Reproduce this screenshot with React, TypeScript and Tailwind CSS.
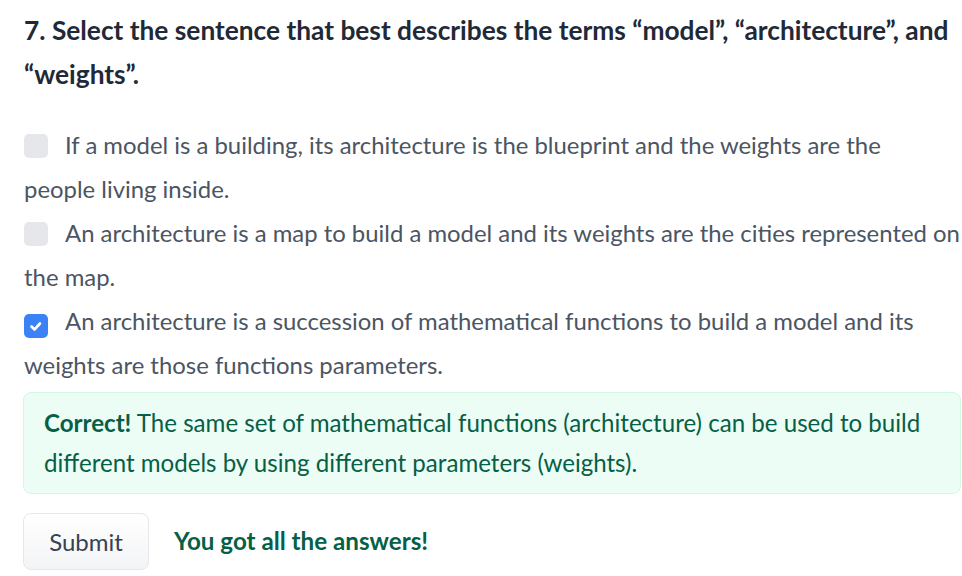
import React from 'react';

const options = [
  {
    id: 'a',
    label: 'If a model is a building, its architecture is the blueprint and the weights are the people\u00a0living inside.',
    checked: false,
  },
  {
    id: 'b',
    label: 'An architecture is a map to build a model and its weights are the cities represented on the map.',
    checked: false,
  },
  {
    id: 'c',
    label: 'An architecture is a succession of mathematical functions to build a model and its weights are those functions parameters.',
    checked: true,
  },
];

function Checkbox({ checked }: { checked: boolean }) {
  return (
    <span
      className={`inline-flex w-6 h-6 rounded-[5px] mr-[17px] align-[-4px] items-center justify-center ${
        checked ? 'bg-[#3b82f6]' : 'bg-[#e5e7eb]'
      }`}
    >
      {checked && (
        <svg width="16" height="16" viewBox="0 0 16 16" fill="none">
          <path d="M3.5 8.5l3 3 5.5-6" stroke="white" strokeWidth="2.6" strokeLinecap="round" strokeLinejoin="round" />
        </svg>
      )}
    </span>
  );
}

export default function App() {
  return (
    <div
      className="w-[962px] h-[576px] bg-white pl-6 pr-[1px] pt-2 overflow-hidden"
      style={{ fontFamily: 'Lato, "Noto Sans", sans-serif' }}
    >
      {/* Question */}
      <h2 className="text-[26.3px] leading-[44px] font-bold text-[#1f2937]">
        7. Select the sentence that best describes the terms “model”, “architecture”, and “weights”.
      </h2>

      {/* Options */}
      <div className="mt-[27px]">
        {options.map((opt) => (
          <label key={opt.id} className="block text-[23.9px] leading-[44px] text-[#4b5563]">
            <Checkbox checked={opt.checked} />
            {opt.label}
          </label>
        ))}
      </div>

      {/* Feedback */}
      <div className="mt-[5px] -ml-px rounded-lg border border-[#d1fae5] bg-[#ecfdf5] px-5 py-[10px] text-[24.1px] leading-[40px] text-[#065f46]">
        <span className="font-bold">Correct!</span> The same set of mathematical functions (architecture) can be used to build
        different models by using different parameters (weights).
      </div>

      {/* Actions */}
      <div className="mt-[19px] flex items-center gap-[25px]">
        <button className="-ml-px h-[57px] w-[126px] rounded-lg border border-[#e5e7eb] bg-gradient-to-b from-white to-[#f3f4f6] text-[24px] text-[#374151]">
          Submit
        </button>
        <span className="text-[24.2px] font-bold text-[#065f46]">You got all the answers!</span>
      </div>
    </div>
  );
}
